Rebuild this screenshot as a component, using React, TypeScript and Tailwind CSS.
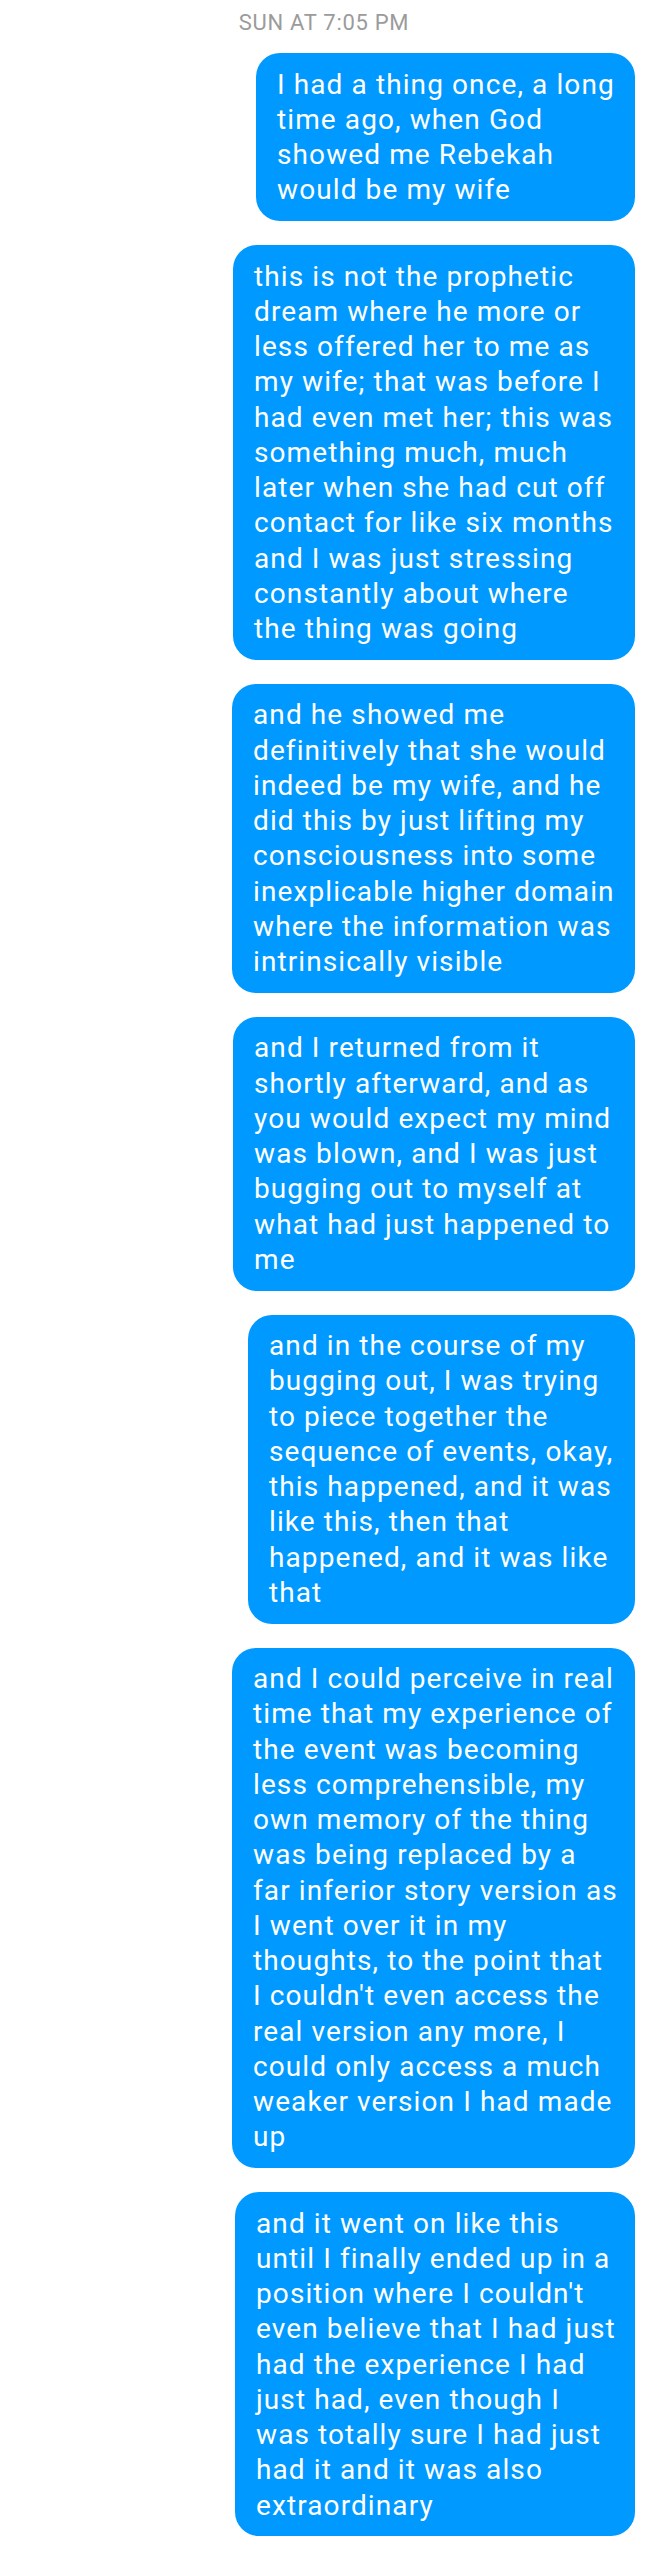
const messages: { w: string; lines: string[] }[] = [
  {
    w: 'w-[379px]',
    lines: [
      'I had a thing once, a long',
      'time ago, when God',
      'showed me Rebekah',
      'would be my wife',
    ],
  },
  {
    w: 'w-[402px]',
    lines: [
      'this is not the prophetic',
      'dream where he more or',
      'less offered her to me as',
      'my wife; that was before I',
      'had even met her; this was',
      'something much, much',
      'later when she had cut off',
      'contact for like six months',
      'and I was just stressing',
      'constantly about where',
      'the thing was going',
    ],
  },
  {
    w: 'w-[403px]',
    lines: [
      'and he showed me',
      'definitively that she would',
      'indeed be my wife, and he',
      'did this by just lifting my',
      'consciousness into some',
      'inexplicable higher domain',
      'where the information was',
      'intrinsically visible',
    ],
  },
  {
    w: 'w-[402px]',
    lines: [
      'and I returned from it',
      'shortly afterward, and as',
      'you would expect my mind',
      'was blown, and I was just',
      'bugging out to myself at',
      'what had just happened to',
      'me',
    ],
  },
  {
    w: 'w-[387px]',
    lines: [
      'and in the course of my',
      'bugging out, I was trying',
      'to piece together the',
      'sequence of events, okay,',
      'this happened, and it was',
      'like this, then that',
      'happened, and it was like',
      'that',
    ],
  },
  {
    w: 'w-[403px]',
    lines: [
      'and I could perceive in real',
      'time that my experience of',
      'the event was becoming',
      'less comprehensible, my',
      'own memory of the thing',
      'was being replaced by a',
      'far inferior story version as',
      'I went over it in my',
      'thoughts, to the point that',
      "I couldn't even access the",
      'real version any more, I',
      'could only access a much',
      'weaker version I had made',
      'up',
    ],
  },
  {
    w: 'w-[400px]',
    lines: [
      'and it went on like this',
      'until I finally ended up in a',
      "position where I couldn't",
      'even believe that I had just',
      'had the experience I had',
      'just had, even though I',
      'was totally sure I had just',
      'had it and it was also',
      'extraordinary',
    ],
  },
];

export default function App() {
  return (
    <div className="min-h-screen bg-white font-['Roboto',sans-serif] pb-[17px]">
      {/* timestamp */}
      <div className="pt-[10px] text-center text-[22px] leading-[25px] tracking-[0.7px] text-[#9b9b9b]">
        SUN AT 7:05 PM
      </div>

      <div className="mt-[18px] flex flex-col items-end gap-[24px] pr-[13px]">
        {messages.map((m, i) => (
          <div
            key={i}
            className={`${m.w} rounded-[24px] bg-[#0099ff] pl-[21px] py-[13.5px] text-[28px] leading-[35.25px] tracking-[1.1px] text-white whitespace-nowrap`}
          >
            {m.lines.map((l, j) => (
              <div key={j}>{l}</div>
            ))}
          </div>
        ))}
      </div>
    </div>
  );
}
